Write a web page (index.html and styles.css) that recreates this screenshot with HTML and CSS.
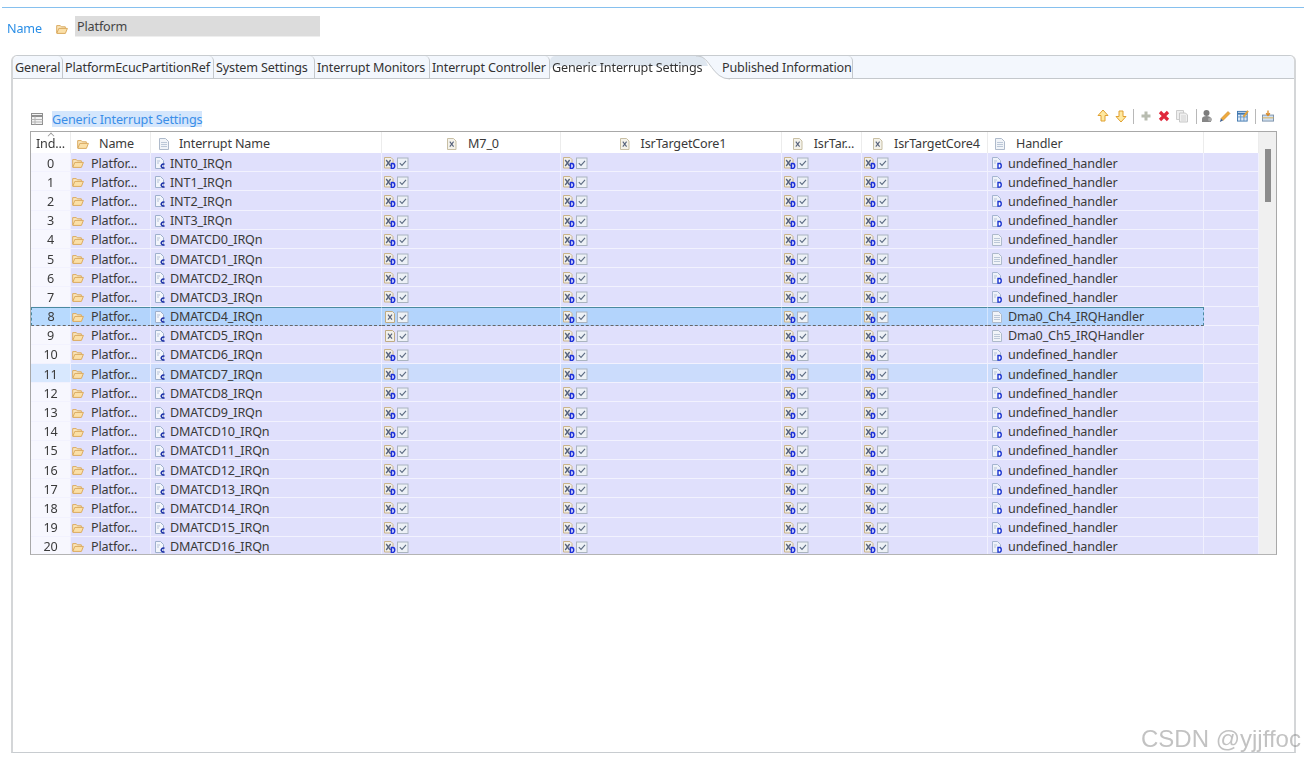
FILE: index.html
```html
<!DOCTYPE html>
<html lang="en">
<head>
<meta charset="utf-8">
<title>Generic Interrupt Settings</title>
<link rel="stylesheet" href="styles.css">
</head>
<body>
<svg class="defs" aria-hidden="true">
<symbol id="fo" viewBox="0 0 12 12"><path d="M.7 10V2.6h3.6l1 1.2h4v1.6" fill="#fae6bc" stroke="#dbab60"/><path d="M.8 10.4 2.8 5.4h8.6l-2 5z" fill="#fbe0a8" stroke="#dbab60"/></symbol>
<symbol id="fc" viewBox="0 0 12 12"><path d="M1.5.5h5l3 3v8h-8z" fill="#f2f5fb" stroke="#9fb0cc"/><path d="M3 4h3M3 6h2" stroke="#b5c2d8"/><path d="M10.5 7.4a2 2 0 1 0 0 3.2" fill="none" stroke="#1c2fa8" stroke-width="1.5"/></symbol>
<symbol id="fd" viewBox="0 0 12 12"><path d="M1.5.5h5l3 3v8h-8z" fill="#eef2fa" stroke="#a5b5d0"/><path d="M3 4h3M3 6h2" stroke="#b5c2d8"/><path d="M7 6.5h1.6c2.2 0 2.2 4.6 0 4.6H7z" fill="#fff" stroke="#1c35d0" stroke-width="1.4"/></symbol>
<symbol id="dc" viewBox="0 0 12 12"><path d="M1.5.5h6l3 3v8h-9z" fill="#f1f4f8" stroke="#aebacb"/><path d="M3 4.5h6M3 6.5h6M3 8.500h6" stroke="#bcc8d8"/></symbol>
<symbol id="xd" viewBox="0 0 12 12"><path d="M.5.5h6.500l2 2v8.500H.5z" fill="#f2f0ea" stroke="#c9b48a"/><path d="M2.200 3 6.600 9M6.600 3 2.200 9" stroke="#56627c" stroke-width="1.300"/><path d="M7.400 6.600h1.500c2.400 0 2.400 4.800 0 4.800H7.400z" fill="#dfe0ff" stroke="#1c30d8" stroke-width="1.500"/></symbol>
<symbol id="xp" viewBox="0 0 12 12"><path d="M1.500.5h7l2 2v9h-9z" fill="#f1f0ea" stroke="#bfab84"/><path d="M4 3.600 8 8.600M8 3.600 4 8.600" stroke="#56627c" stroke-width="1.200"/></symbol>
<symbol id="xh" viewBox="0 0 12 12"><path d="M1.500.5h6l2.500 2.500v8.500h-8.500z" fill="#f4f2ea" stroke="#c8bfa4"/><path d="M3.800 3.600 7.600 8.600M7.600 3.600 3.800 8.600" stroke="#56627c" stroke-width="1.100"/></symbol>
<symbol id="ck" viewBox="0 0 12 12"><rect x=".5" y="1" width="10.500" height="10.500" fill="#edf1f6" stroke="#aab4c0"/><path d="M2.800 6.200 5 8.400 9 3.800" fill="none" stroke="#5c6b82" stroke-width="1.100"/></symbol>
<symbol id="tb" viewBox="0 0 12 12"><rect x=".5" y=".5" width="11" height="11" fill="#f2f2f2" stroke="#8f8f8f"/><path d="M.5 3h11" stroke="#8f8f8f" stroke-width="2"/><path d="M.5 6.500h11M.5 9h11M4 3.500v8" stroke="#b4b4b4"/></symbol>
</svg>

<div class="page">
  <div class="rule"></div>
  <div class="name-row">
    <span class="name-label">Name</span>
    <svg class="i folder-top"><use href="#fo"/></svg>
    <div class="name-field">Platform</div>
  </div>

  <section class="panel">
    <nav class="tabs">
      <span class="tab t1">General</span>
      <span class="tab t2">PlatformEcucPartitionRef</span>
      <span class="tab t3">System Settings</span>
      <span class="tab t4">Interrupt Monitors</span>
      <span class="tab t5">Interrupt Controller</span>
      <span class="tab active">
        <svg class="tab-curve" viewBox="0 0 34 24"><path d="M0 0h2c12 0 14 23 32 23v1H0z" fill="#fff"/><path d="M0 0h2c5 0 8 4 10 10H0z" fill="#dfe7f0"/><path d="M0 0h2c12 0 14 23 32 23" fill="none" stroke="#c4c8cc"/></svg>
        <span class="tab-text">Generic Interrupt Settings</span>
      </span>
      <span class="tab t7">Published Information</span>
    </nav>
    <div class="panel-body">
      <div class="section-head">
        <svg class="i sec-icon"><use href="#tb"/></svg>
        <span class="section-title">Generic Interrupt Settings</span>
        <div class="toolbar">
          <svg class="tool" viewBox="0 0 12 14"><path d="M6 1 11 6.500H8V12H4V6.500H1z" fill="#ffe9a0" stroke="#e0a030"/></svg>
          <svg class="tool t-gap" viewBox="0 0 12 14"><path d="M6 13 11 7.500H8V2H4V7.500H1z" fill="#ffe9a0" stroke="#e0a030"/></svg>
          <span class="sep"></span>
          <svg class="tool" viewBox="0 0 12 14"><path d="M6 2.500v9M1.500 7h9" stroke="#b8bcb0" stroke-width="3"/></svg>
          <svg class="tool" viewBox="0 0 12 14"><path d="M2 3l8 8M10 3l-8 8" stroke="#e0283c" stroke-width="3.200"/></svg>
          <svg class="tool" viewBox="0 0 12 14"><path d="M.5 1.500h7v9h-7z" fill="#eee" stroke="#ccc"/><path d="M3.500 4h6l2 2v7h-8z" fill="#f0f0f0" stroke="#c8c8c8"/><path d="M5 7h5M5 9h5M5 11h5" stroke="#d4d4d4"/></svg>
          <span class="sep s2"></span>
          <svg class="tool" viewBox="0 0 12 14"><circle cx="5.500" cy="4" r="3" fill="#7c7c7c"/><path d="M1 13V9.500C1 8 3 7 5.500 7S10 8 10 9.500V13z" fill="#868686"/><circle cx="9" cy="10.500" r="2" fill="#a8a8a8"/></svg>
          <svg class="tool" viewBox="0 0 12 14"><path d="M2 9.500 9 2.500l2 2-7 7z" fill="#eea93c" stroke="#c98628" stroke-width=".6"/><path d="M2 9.500.8 13l3.200-1.500z" fill="#3d5f90"/></svg>
          <svg class="tool" viewBox="0 0 13 14"><rect x=".5" y="2" width="10.500" height="10.500" fill="#dbe8f6" stroke="#3f76ae"/><path d="M.5 4.500h10.500" stroke="#3f76ae" stroke-width="2"/><path d="M.5 8h10.500M4 4.500v8M7.500 4.500v8" stroke="#5f92c4"/><path d="M7 8l5-6.500" stroke="#e3a33a" stroke-width="2"/></svg>
          <span class="sep"></span>
          <svg class="tool" viewBox="0 0 13 14"><rect x=".5" y="6" width="12" height="6.500" fill="#cfe0f2" stroke="#7c90a8"/><path d="M.5 9h12" stroke="#e0b050"/><path d="M6.500 1v5M4.500 4l2 2.500 2-2.500" fill="none" stroke="#d98a28" stroke-width="1.400"/></svg>
        </div>
      </div>

      <div class="table">
        <div class="grid">
          <div class="row head">
            <div class="c idx"><span class="sort"></span>Ind...</div>
            <div class="c h-nm"><svg class="i"><use href="#fo"/></svg>Name</div>
            <div class="c h-irq"><svg class="i"><use href="#dc"/></svg>Interrupt Name</div>
            <div class="c h-ctr"><svg class="i"><use href="#xh"/></svg>M7_0</div>
            <div class="c h-ctr"><svg class="i"><use href="#xh"/></svg>IsrTargetCore1</div>
            <div class="c h-ctr"><svg class="i"><use href="#xh"/></svg>IsrTar...</div>
            <div class="c h-ctr"><svg class="i"><use href="#xh"/></svg>IsrTargetCore4</div>
            <div class="c h-hnd"><svg class="i"><use href="#dc"/></svg>Handler</div>
            <div class="c"></div>
          </div>

          <div class="row"><div class="c idx">0</div><div class="c nm"><svg class="i"><use href="#fo"/></svg>Platfor...</div><div class="c irq"><svg class="i"><use href="#fc"/></svg>INT0_IRQn</div><div class="c fl"><svg class="i"><use href="#xd"/></svg><svg class="i"><use href="#ck"/></svg></div><div class="c fl"><svg class="i"><use href="#xd"/></svg><svg class="i"><use href="#ck"/></svg></div><div class="c fl"><svg class="i"><use href="#xd"/></svg><svg class="i"><use href="#ck"/></svg></div><div class="c fl"><svg class="i"><use href="#xd"/></svg><svg class="i"><use href="#ck"/></svg></div><div class="c hn"><svg class="i"><use href="#fd"/></svg>undefined_handler</div><div class="c end"></div></div>
          <div class="row"><div class="c idx">1</div><div class="c nm"><svg class="i"><use href="#fo"/></svg>Platfor...</div><div class="c irq"><svg class="i"><use href="#fc"/></svg>INT1_IRQn</div><div class="c fl"><svg class="i"><use href="#xd"/></svg><svg class="i"><use href="#ck"/></svg></div><div class="c fl"><svg class="i"><use href="#xd"/></svg><svg class="i"><use href="#ck"/></svg></div><div class="c fl"><svg class="i"><use href="#xd"/></svg><svg class="i"><use href="#ck"/></svg></div><div class="c fl"><svg class="i"><use href="#xd"/></svg><svg class="i"><use href="#ck"/></svg></div><div class="c hn"><svg class="i"><use href="#fd"/></svg>undefined_handler</div><div class="c end"></div></div>
          <div class="row"><div class="c idx">2</div><div class="c nm"><svg class="i"><use href="#fo"/></svg>Platfor...</div><div class="c irq"><svg class="i"><use href="#fc"/></svg>INT2_IRQn</div><div class="c fl"><svg class="i"><use href="#xd"/></svg><svg class="i"><use href="#ck"/></svg></div><div class="c fl"><svg class="i"><use href="#xd"/></svg><svg class="i"><use href="#ck"/></svg></div><div class="c fl"><svg class="i"><use href="#xd"/></svg><svg class="i"><use href="#ck"/></svg></div><div class="c fl"><svg class="i"><use href="#xd"/></svg><svg class="i"><use href="#ck"/></svg></div><div class="c hn"><svg class="i"><use href="#fd"/></svg>undefined_handler</div><div class="c end"></div></div>
          <div class="row"><div class="c idx">3</div><div class="c nm"><svg class="i"><use href="#fo"/></svg>Platfor...</div><div class="c irq"><svg class="i"><use href="#fc"/></svg>INT3_IRQn</div><div class="c fl"><svg class="i"><use href="#xd"/></svg><svg class="i"><use href="#ck"/></svg></div><div class="c fl"><svg class="i"><use href="#xd"/></svg><svg class="i"><use href="#ck"/></svg></div><div class="c fl"><svg class="i"><use href="#xd"/></svg><svg class="i"><use href="#ck"/></svg></div><div class="c fl"><svg class="i"><use href="#xd"/></svg><svg class="i"><use href="#ck"/></svg></div><div class="c hn"><svg class="i"><use href="#fd"/></svg>undefined_handler</div><div class="c end"></div></div>
          <div class="row"><div class="c idx">4</div><div class="c nm"><svg class="i"><use href="#fo"/></svg>Platfor...</div><div class="c irq"><svg class="i"><use href="#fc"/></svg>DMATCD0_IRQn</div><div class="c fl"><svg class="i"><use href="#xd"/></svg><svg class="i"><use href="#ck"/></svg></div><div class="c fl"><svg class="i"><use href="#xd"/></svg><svg class="i"><use href="#ck"/></svg></div><div class="c fl"><svg class="i"><use href="#xd"/></svg><svg class="i"><use href="#ck"/></svg></div><div class="c fl"><svg class="i"><use href="#xd"/></svg><svg class="i"><use href="#ck"/></svg></div><div class="c hn"><svg class="i"><use href="#dc"/></svg>undefined_handler</div><div class="c end"></div></div>
          <div class="row"><div class="c idx">5</div><div class="c nm"><svg class="i"><use href="#fo"/></svg>Platfor...</div><div class="c irq"><svg class="i"><use href="#fc"/></svg>DMATCD1_IRQn</div><div class="c fl"><svg class="i"><use href="#xd"/></svg><svg class="i"><use href="#ck"/></svg></div><div class="c fl"><svg class="i"><use href="#xd"/></svg><svg class="i"><use href="#ck"/></svg></div><div class="c fl"><svg class="i"><use href="#xd"/></svg><svg class="i"><use href="#ck"/></svg></div><div class="c fl"><svg class="i"><use href="#xd"/></svg><svg class="i"><use href="#ck"/></svg></div><div class="c hn"><svg class="i"><use href="#dc"/></svg>undefined_handler</div><div class="c end"></div></div>
          <div class="row"><div class="c idx">6</div><div class="c nm"><svg class="i"><use href="#fo"/></svg>Platfor...</div><div class="c irq"><svg class="i"><use href="#fc"/></svg>DMATCD2_IRQn</div><div class="c fl"><svg class="i"><use href="#xd"/></svg><svg class="i"><use href="#ck"/></svg></div><div class="c fl"><svg class="i"><use href="#xd"/></svg><svg class="i"><use href="#ck"/></svg></div><div class="c fl"><svg class="i"><use href="#xd"/></svg><svg class="i"><use href="#ck"/></svg></div><div class="c fl"><svg class="i"><use href="#xd"/></svg><svg class="i"><use href="#ck"/></svg></div><div class="c hn"><svg class="i"><use href="#fd"/></svg>undefined_handler</div><div class="c end"></div></div>
          <div class="row"><div class="c idx">7</div><div class="c nm"><svg class="i"><use href="#fo"/></svg>Platfor...</div><div class="c irq"><svg class="i"><use href="#fc"/></svg>DMATCD3_IRQn</div><div class="c fl"><svg class="i"><use href="#xd"/></svg><svg class="i"><use href="#ck"/></svg></div><div class="c fl"><svg class="i"><use href="#xd"/></svg><svg class="i"><use href="#ck"/></svg></div><div class="c fl"><svg class="i"><use href="#xd"/></svg><svg class="i"><use href="#ck"/></svg></div><div class="c fl"><svg class="i"><use href="#xd"/></svg><svg class="i"><use href="#ck"/></svg></div><div class="c hn"><svg class="i"><use href="#fd"/></svg>undefined_handler</div><div class="c end"></div></div>
          <div class="row sel"><div class="c idx">8</div><div class="c nm"><svg class="i"><use href="#fo"/></svg>Platfor...</div><div class="c irq"><svg class="i"><use href="#fc"/></svg>DMATCD4_IRQn</div><div class="c fl"><svg class="i"><use href="#xp"/></svg><svg class="i"><use href="#ck"/></svg></div><div class="c fl"><svg class="i"><use href="#xd"/></svg><svg class="i"><use href="#ck"/></svg></div><div class="c fl"><svg class="i"><use href="#xd"/></svg><svg class="i"><use href="#ck"/></svg></div><div class="c fl"><svg class="i"><use href="#xd"/></svg><svg class="i"><use href="#ck"/></svg></div><div class="c hn"><svg class="i"><use href="#dc"/></svg>Dma0_Ch4_IRQHandler</div><div class="c end"></div></div>
          <div class="row"><div class="c idx">9</div><div class="c nm"><svg class="i"><use href="#fo"/></svg>Platfor...</div><div class="c irq"><svg class="i"><use href="#fc"/></svg>DMATCD5_IRQn</div><div class="c fl"><svg class="i"><use href="#xp"/></svg><svg class="i"><use href="#ck"/></svg></div><div class="c fl"><svg class="i"><use href="#xd"/></svg><svg class="i"><use href="#ck"/></svg></div><div class="c fl"><svg class="i"><use href="#xd"/></svg><svg class="i"><use href="#ck"/></svg></div><div class="c fl"><svg class="i"><use href="#xd"/></svg><svg class="i"><use href="#ck"/></svg></div><div class="c hn"><svg class="i"><use href="#dc"/></svg>Dma0_Ch5_IRQHandler</div><div class="c end"></div></div>
          <div class="row"><div class="c idx">10</div><div class="c nm"><svg class="i"><use href="#fo"/></svg>Platfor...</div><div class="c irq"><svg class="i"><use href="#fc"/></svg>DMATCD6_IRQn</div><div class="c fl"><svg class="i"><use href="#xd"/></svg><svg class="i"><use href="#ck"/></svg></div><div class="c fl"><svg class="i"><use href="#xd"/></svg><svg class="i"><use href="#ck"/></svg></div><div class="c fl"><svg class="i"><use href="#xd"/></svg><svg class="i"><use href="#ck"/></svg></div><div class="c fl"><svg class="i"><use href="#xd"/></svg><svg class="i"><use href="#ck"/></svg></div><div class="c hn"><svg class="i"><use href="#fd"/></svg>undefined_handler</div><div class="c end"></div></div>
          <div class="row hov"><div class="c idx">11</div><div class="c nm"><svg class="i"><use href="#fo"/></svg>Platfor...</div><div class="c irq"><svg class="i"><use href="#fc"/></svg>DMATCD7_IRQn</div><div class="c fl"><svg class="i"><use href="#xd"/></svg><svg class="i"><use href="#ck"/></svg></div><div class="c fl"><svg class="i"><use href="#xd"/></svg><svg class="i"><use href="#ck"/></svg></div><div class="c fl"><svg class="i"><use href="#xd"/></svg><svg class="i"><use href="#ck"/></svg></div><div class="c fl"><svg class="i"><use href="#xd"/></svg><svg class="i"><use href="#ck"/></svg></div><div class="c hn"><svg class="i"><use href="#fd"/></svg>undefined_handler</div><div class="c end"></div></div>
          <div class="row"><div class="c idx">12</div><div class="c nm"><svg class="i"><use href="#fo"/></svg>Platfor...</div><div class="c irq"><svg class="i"><use href="#fc"/></svg>DMATCD8_IRQn</div><div class="c fl"><svg class="i"><use href="#xd"/></svg><svg class="i"><use href="#ck"/></svg></div><div class="c fl"><svg class="i"><use href="#xd"/></svg><svg class="i"><use href="#ck"/></svg></div><div class="c fl"><svg class="i"><use href="#xd"/></svg><svg class="i"><use href="#ck"/></svg></div><div class="c fl"><svg class="i"><use href="#xd"/></svg><svg class="i"><use href="#ck"/></svg></div><div class="c hn"><svg class="i"><use href="#fd"/></svg>undefined_handler</div><div class="c end"></div></div>
          <div class="row"><div class="c idx">13</div><div class="c nm"><svg class="i"><use href="#fo"/></svg>Platfor...</div><div class="c irq"><svg class="i"><use href="#fc"/></svg>DMATCD9_IRQn</div><div class="c fl"><svg class="i"><use href="#xd"/></svg><svg class="i"><use href="#ck"/></svg></div><div class="c fl"><svg class="i"><use href="#xd"/></svg><svg class="i"><use href="#ck"/></svg></div><div class="c fl"><svg class="i"><use href="#xd"/></svg><svg class="i"><use href="#ck"/></svg></div><div class="c fl"><svg class="i"><use href="#xd"/></svg><svg class="i"><use href="#ck"/></svg></div><div class="c hn"><svg class="i"><use href="#fd"/></svg>undefined_handler</div><div class="c end"></div></div>
          <div class="row"><div class="c idx">14</div><div class="c nm"><svg class="i"><use href="#fo"/></svg>Platfor...</div><div class="c irq"><svg class="i"><use href="#fc"/></svg>DMATCD10_IRQn</div><div class="c fl"><svg class="i"><use href="#xd"/></svg><svg class="i"><use href="#ck"/></svg></div><div class="c fl"><svg class="i"><use href="#xd"/></svg><svg class="i"><use href="#ck"/></svg></div><div class="c fl"><svg class="i"><use href="#xd"/></svg><svg class="i"><use href="#ck"/></svg></div><div class="c fl"><svg class="i"><use href="#xd"/></svg><svg class="i"><use href="#ck"/></svg></div><div class="c hn"><svg class="i"><use href="#fd"/></svg>undefined_handler</div><div class="c end"></div></div>
          <div class="row"><div class="c idx">15</div><div class="c nm"><svg class="i"><use href="#fo"/></svg>Platfor...</div><div class="c irq"><svg class="i"><use href="#fc"/></svg>DMATCD11_IRQn</div><div class="c fl"><svg class="i"><use href="#xd"/></svg><svg class="i"><use href="#ck"/></svg></div><div class="c fl"><svg class="i"><use href="#xd"/></svg><svg class="i"><use href="#ck"/></svg></div><div class="c fl"><svg class="i"><use href="#xd"/></svg><svg class="i"><use href="#ck"/></svg></div><div class="c fl"><svg class="i"><use href="#xd"/></svg><svg class="i"><use href="#ck"/></svg></div><div class="c hn"><svg class="i"><use href="#fd"/></svg>undefined_handler</div><div class="c end"></div></div>
          <div class="row"><div class="c idx">16</div><div class="c nm"><svg class="i"><use href="#fo"/></svg>Platfor...</div><div class="c irq"><svg class="i"><use href="#fc"/></svg>DMATCD12_IRQn</div><div class="c fl"><svg class="i"><use href="#xd"/></svg><svg class="i"><use href="#ck"/></svg></div><div class="c fl"><svg class="i"><use href="#xd"/></svg><svg class="i"><use href="#ck"/></svg></div><div class="c fl"><svg class="i"><use href="#xd"/></svg><svg class="i"><use href="#ck"/></svg></div><div class="c fl"><svg class="i"><use href="#xd"/></svg><svg class="i"><use href="#ck"/></svg></div><div class="c hn"><svg class="i"><use href="#fd"/></svg>undefined_handler</div><div class="c end"></div></div>
          <div class="row"><div class="c idx">17</div><div class="c nm"><svg class="i"><use href="#fo"/></svg>Platfor...</div><div class="c irq"><svg class="i"><use href="#fc"/></svg>DMATCD13_IRQn</div><div class="c fl"><svg class="i"><use href="#xd"/></svg><svg class="i"><use href="#ck"/></svg></div><div class="c fl"><svg class="i"><use href="#xd"/></svg><svg class="i"><use href="#ck"/></svg></div><div class="c fl"><svg class="i"><use href="#xd"/></svg><svg class="i"><use href="#ck"/></svg></div><div class="c fl"><svg class="i"><use href="#xd"/></svg><svg class="i"><use href="#ck"/></svg></div><div class="c hn"><svg class="i"><use href="#fd"/></svg>undefined_handler</div><div class="c end"></div></div>
          <div class="row"><div class="c idx">18</div><div class="c nm"><svg class="i"><use href="#fo"/></svg>Platfor...</div><div class="c irq"><svg class="i"><use href="#fc"/></svg>DMATCD14_IRQn</div><div class="c fl"><svg class="i"><use href="#xd"/></svg><svg class="i"><use href="#ck"/></svg></div><div class="c fl"><svg class="i"><use href="#xd"/></svg><svg class="i"><use href="#ck"/></svg></div><div class="c fl"><svg class="i"><use href="#xd"/></svg><svg class="i"><use href="#ck"/></svg></div><div class="c fl"><svg class="i"><use href="#xd"/></svg><svg class="i"><use href="#ck"/></svg></div><div class="c hn"><svg class="i"><use href="#fd"/></svg>undefined_handler</div><div class="c end"></div></div>
          <div class="row"><div class="c idx">19</div><div class="c nm"><svg class="i"><use href="#fo"/></svg>Platfor...</div><div class="c irq"><svg class="i"><use href="#fc"/></svg>DMATCD15_IRQn</div><div class="c fl"><svg class="i"><use href="#xd"/></svg><svg class="i"><use href="#ck"/></svg></div><div class="c fl"><svg class="i"><use href="#xd"/></svg><svg class="i"><use href="#ck"/></svg></div><div class="c fl"><svg class="i"><use href="#xd"/></svg><svg class="i"><use href="#ck"/></svg></div><div class="c fl"><svg class="i"><use href="#xd"/></svg><svg class="i"><use href="#ck"/></svg></div><div class="c hn"><svg class="i"><use href="#fd"/></svg>undefined_handler</div><div class="c end"></div></div>
          <div class="row"><div class="c idx">20</div><div class="c nm"><svg class="i"><use href="#fo"/></svg>Platfor...</div><div class="c irq"><svg class="i"><use href="#fc"/></svg>DMATCD16_IRQn</div><div class="c fl"><svg class="i"><use href="#xd"/></svg><svg class="i"><use href="#ck"/></svg></div><div class="c fl"><svg class="i"><use href="#xd"/></svg><svg class="i"><use href="#ck"/></svg></div><div class="c fl"><svg class="i"><use href="#xd"/></svg><svg class="i"><use href="#ck"/></svg></div><div class="c fl"><svg class="i"><use href="#xd"/></svg><svg class="i"><use href="#ck"/></svg></div><div class="c hn"><svg class="i"><use href="#fd"/></svg>undefined_handler</div><div class="c end"></div></div>
        </div>
        <div class="scrollbar"><div class="thumb"></div></div>
      </div>
    </div>
  </section>
  <div class="watermark">CSDN @yjjffoc</div>
</div>
</body>
</html>
```

FILE: styles.css
```css
* { box-sizing: border-box; }
html, body { margin: 0; background: #fff; }
body { font-family: "Noto Sans", "Open Sans", sans-serif; font-size: 12.6px; letter-spacing: -.15px; color: #333; width: 1304px; height: 760px; overflow: hidden; }
.defs { position: absolute; width: 0; height: 0; }
.page { position: relative; width: 1304px; height: 760px; overflow: hidden; filter: blur(.4px); }
.i { width: 12px; height: 12px; flex: none; display: block; }

.rule { height: 1px; margin: 7px 0 0 2px; background: #86c0ee; }
.name-row { display: flex; align-items: center; margin-top: 8px; height: 20px; padding-left: 7px; }
.name-label { color: #2a8ee6; width: 49px; position: relative; top: 2px; }
.folder-top { position: relative; top: 3px; }
.name-field { margin-left: 7px; width: 245px; height: 21px; background: #dcdcdc; border-bottom: 1px solid #eee; padding-left: 2px; line-height: 22px; color: #444; }

.panel { margin: 19px 0 0 11px; width: 1285px; height: 698px; border: 1px solid #c8ccd0; border-left: 2px solid #d4d6d8; border-right: 2px solid #d4d6d8; border-radius: 6px 6px 0 0; display: flex; flex-direction: column; }
.tabs { display: flex; height: 23px; background: #f3f7fd; border-bottom: 1px solid #c4c8cc; border-radius: 6px 6px 0 0; flex: none; }
.tab { height: 22px; line-height: 24px; border-right: 1px solid #c4c8cc; padding-left: 2px; white-space: nowrap; border-radius: 0 5px 0 0; }
.t1 { width: 50px; }
.t2 { width: 151px; }
.t3 { width: 101px; }
.t4 { width: 115px; }
.t5 { width: 120px; }
.active { position: relative; width: 146px; height: 23px; background: #fff; border-right: 0; border-radius: 5px 0 0 0; z-index: 1; box-shadow: inset 0 10px 0 #dfe7f0; }
.tab-text { position: relative; }
.tab-curve { position: absolute; left: 146px; top: 0; width: 34px; height: 24px; }
.t7 { width: 157px; padding-left: 26px; }

.panel-body { flex: 1; padding: 32px 16px 0 17px; background: #fff; }
.section-head { display: flex; align-items: flex-start; height: 20px; padding-left: 1px; }
.sec-icon { margin-top: 2px; }
.section-title { margin-left: 9px; height: 16px; line-height: 18px; background: #d4e6fc; color: #3a8ee8; }
.toolbar { margin-left: auto; display: flex; align-items: center; gap: 6px; height: 14px; margin-right: 4px; margin-top: -2px; }
.tool { width: 12px; height: 14px; display: block; flex: none; }
.sep { width: 1px; height: 15px; background: #b8b8b8; }
.s2 { margin-left: 2px; margin-right: -2px; }

.table { display: flex; width: 1247px; height: 424px; border: 1px solid #a8a8a8; border-bottom-color: #b4b4b4; overflow: hidden; }
.grid { width: 1228px; flex: none; background: #fff; }
.row { display: grid; grid-template-columns: 40px 80px 231px 179px 221px 80px 126px 216px 55px; height: 19.2px; }
.row.head { height: 21px; background: #fff; }
.c { display: flex; align-items: center; white-space: nowrap; overflow: hidden; background: #e0e0fc; border-right: 1px solid #f0f0fe; border-bottom: 1px solid #f2f2fe; padding-left: 3px; padding-top: 2px; color: #3a3a3a; }
.idx { background: #f7f7fe; justify-content: center; padding-left: 0; position: relative; }
.head .c { background: #fff; border-right-color: #ececec; border-bottom: 0; padding-top: 2px; }
.head .idx { background: #fff; }
.nm { padding-left: 1px; gap: 7px; }
.irq { gap: 4px; }
.fl { padding-left: 2px; gap: 1px; }
.hn { gap: 5px; }
.h-nm { padding-left: 6px; gap: 10px; }
.h-irq { padding-left: 7px; gap: 9px; }
.h-ctr { justify-content: center; gap: 10px; }
.h-hnd { padding-left: 6px; gap: 10px; }
.sort { position: absolute; top: 1px; left: 17px; width: 6px; height: 6px; border-left: 1px solid #999; border-top: 1px solid #999; transform: rotate(45deg) scale(.8); }

.sel .c { background: #b3d4fc; border-top: 1px solid #4a8aa0; border-bottom: 1px dashed #666; border-right-color: #d4e6fe; padding-top: 1px; }
.sel .idx { border-left: 1px dashed #4a8aa0; background: #b8dafe; }
.sel .hn { border-right: 1px dashed #4a8aa0; }
.sel .end { background: #e0e0fc; border: 0; border-bottom: 1px solid #f2f2fe; }
.hov .c { background: #cbdcfc; }
.hov .idx { background: #d8e8fe; }
.hov .end { background: #e0e0fc; }

.scrollbar { flex: 1; background: #f0f0f0; padding: 17px 5px 0 6px; }
.thumb { height: 53px; background: #8c8c8c; }

.watermark { position: absolute; left: 1141px; top: 724px; font-family: "Liberation Sans", sans-serif; font-size: 24px; letter-spacing: 0; line-height: 30px; color: rgba(110,110,110,.42); white-space: nowrap; }
```
